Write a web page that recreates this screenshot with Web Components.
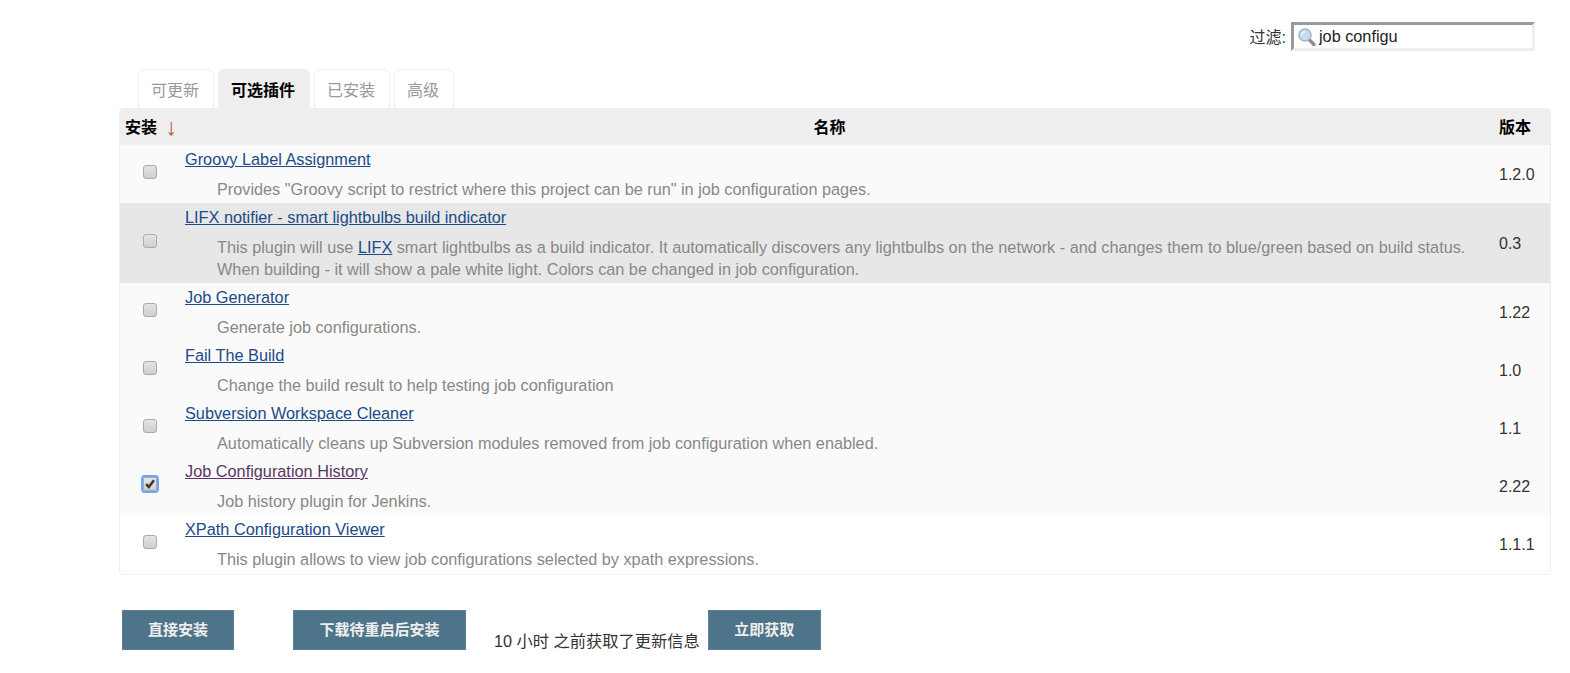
<!DOCTYPE html>
<html lang="zh">
<head>
<meta charset="utf-8">
<title>插件管理</title>
<style>
  html, body { margin: 0; padding: 0; background: #fff; }
  body { font: 16px "Liberation Sans", "Noto Sans CJK SC", sans-serif; color: #333; overflow: hidden; }
</style>
</head>
<body>
<plugin-page>
  <filter-box slot="filter" label="过滤:" value="job configu"></filter-box>

  <tab-item slot="tabs">可更新</tab-item>
  <tab-item slot="tabs" active>可选插件</tab-item>
  <tab-item slot="tabs">已安装</tab-item>
  <tab-item slot="tabs">高级</tab-item>

  <plugin-row name="Groovy Label Assignment" version="1.2.0">Provides "Groovy script to restrict where this project can be run" in job configuration pages.</plugin-row>
  <plugin-row name="LIFX notifier - smart lightbulbs build indicator" version="0.3" hilite>This plugin will use <a href="#" style="color:#204a87">LIFX</a> smart lightbulbs as a build indicator. It automatically discovers any lightbulbs on the network - and changes them to blue/green based on build status. When building - it will show a pale white light. Colors can be changed in job configuration.</plugin-row>
  <plugin-row name="Job Generator" version="1.22">Generate job configurations.</plugin-row>
  <plugin-row name="Fail The Build" version="1.0">Change the build result to help testing job configuration</plugin-row>
  <plugin-row name="Subversion Workspace Cleaner" version="1.1">Automatically cleans up Subversion modules removed from job configuration when enabled.</plugin-row>
  <plugin-row name="Job Configuration History" version="2.22" checked>Job history plugin for Jenkins.</plugin-row>
  <plugin-row name="XPath Configuration Viewer" version="1.1.1" plain>This plugin allows to view job configurations selected by xpath expressions.</plugin-row>

  <action-button slot="footer" style="width:112px;margin-left:122px">直接安装</action-button>
  <action-button slot="footer" style="width:173px;margin-left:59px">下载待重启后安装</action-button>
  <update-note slot="footer">10 小时 之前获取了更新信息</update-note>
  <action-button slot="footer" style="width:113px">立即获取</action-button>
</plugin-page>

<script>
class PluginPage extends HTMLElement {
  constructor() {
    super();
    this.attachShadow({ mode: 'open' });
  }
  connectedCallback() {
    this.shadowRoot.innerHTML = `
      <style>
        :host { display: block; }
        .top { display: flex; justify-content: flex-end; padding: 22px 35px 0 0; height: 69px; box-sizing: border-box; }
        .tabs { display: flex; gap: 4px; padding-left: 138px; height: 39px; }
        .table { margin-left: 119px; width: 1432px; box-sizing: border-box; height: 467px; border: 1px solid #eee; border-radius: 4px; overflow: hidden; }
        .head { display: grid; grid-template-columns: 60px 1fr 51px; height: 36px; box-sizing: border-box; padding-bottom: 2px; background: #eee; color: #000; font-weight: bold; align-items: center; }
        .head div:first-child { padding-left: 5px; white-space: nowrap; }
        .head .name { text-align: center; padding-right: 20px; }
        .arrow { color: #b5603a; font-weight: normal; font-size: 24px; line-height: 0; margin-left: 4px; vertical-align: -2px; }
        .footer { display: flex; padding-top: 35px; }
      </style>
      <div class="top"><slot name="filter"></slot></div>
      <div class="tabs"><slot name="tabs"></slot></div>
      <div class="table">
        <div class="head">
          <div>安装 <span class="arrow">↓</span></div>
          <div class="name">名称</div>
          <div>版本</div>
        </div>
        <slot></slot>
      </div>
      <div class="footer"><slot name="footer"></slot></div>
    `;
  }
}

class FilterBox extends HTMLElement {
  constructor() {
    super();
    this.attachShadow({ mode: 'open' });
  }
  connectedCallback() {
    this.shadowRoot.innerHTML = `
      <style>
        :host { display: flex; align-items: center; gap: 5px; height: 29px; }
        .label { color: #333; font-size: 16px; padding-bottom: 2px; }
        .box { display: flex; align-items: center; width: 244px; height: 29px; box-sizing: border-box; border: 3px solid; border-color: #999 #eee #eee #999; background: #fff; padding-left: 3px; }
        svg { width: 20px; height: 20px; flex: none; }
        input { border: 0; outline: 0; padding: 0; margin-left: 2px; width: 190px; font: 16.25px "Liberation Sans", sans-serif; color: #222; background: transparent; }
      </style>
      <span class="label">${this.getAttribute('label')}</span>
      <div class="box">
        <svg viewBox="0 0 20 20">
          <path d="M11.5 12 L17 17.5" stroke="#8b8f93" stroke-width="3.4" stroke-linecap="round"/>
          <circle cx="8" cy="8" r="6" fill="#c5dcf2" stroke="#a3b5c6" stroke-width="1.6"/>
          <path d="M4.6 8 A3.4 3.4 0 0 1 8 4.6" fill="none" stroke="#f2f8fd" stroke-width="1.4"/>
        </svg>
        <input value="${this.getAttribute('value')}">
      </div>
    `;
  }
}

class TabItem extends HTMLElement {
  constructor() {
    super();
    this.attachShadow({ mode: 'open' });
  }
  connectedCallback() {
    this.shadowRoot.innerHTML = `
      <style>
        :host { display: flex; align-items: center; box-sizing: border-box; height: 39px; padding: 0 14px 0 12px; border: 1px solid #eee; border-bottom: 0; border-radius: 6px 6px 0 0; color: #999; font-size: 16px; }
        :host([active]) { background: #eee; color: #000; font-weight: bold; }
      </style>
      <slot></slot>
    `;
  }
}

class PluginCheck extends HTMLElement {
  constructor() {
    super();
    this.attachShadow({ mode: 'open' });
  }
  connectedCallback() {
    const mark = this.hasAttribute('checked')
      ? '<svg viewBox="0 0 14 14"><path d="M2.5 7.2 L5.6 10.4 L11.6 2.6" fill="none" stroke="#3a3a3a" stroke-width="3"/></svg>'
      : '';
    this.shadowRoot.innerHTML = `
      <style>
        :host { display: block; width: 14px; height: 14px; box-sizing: border-box; border: 1px solid #aaa; border-radius: 3px; background: linear-gradient(#e4e4e4, #cfcfcf); }
        :host([checked]) { box-shadow: 0 0 0 2px #6ea6f5; border-radius: 2px; }
        svg { display: block; width: 12px; height: 12px; }
      </style>
      ${mark}
    `;
  }
}

class PluginRow extends HTMLElement {
  constructor() {
    super();
    this.attachShadow({ mode: 'open' });
  }
  connectedCallback() {
    const checked = this.hasAttribute('checked');
    this.shadowRoot.innerHTML = `
      <style>
        :host { display: grid; grid-template-columns: 60px 1fr 51px; background: #fafafa; }
        :host([hilite]) { background: #e7e7e7; }
        :host([plain]) { background: #fff; }
        .check { display: flex; justify-content: center; align-items: center; padding-bottom: 5px; }
        .main { padding: 5px 20px 3px 5px; line-height: 18px; font-size: 16.3px; }
        .main a { color: ${checked ? '#5c3566' : '#204a87'}; }
        .desc { padding: 11px 0 0 32px; color: #888; line-height: 21px; font-size: 16.25px; }
        :host([hilite]) .desc { padding-top: 10px; line-height: 22px; }
        .ver { display: flex; align-items: center; padding-top: 2px; color: #333; }
      </style>
      <div class="check"><plugin-check ${checked ? 'checked' : ''}></plugin-check></div>
      <div class="main">
        <a href="#">${this.getAttribute('name')}</a>
        <div class="desc"><slot></slot></div>
      </div>
      <div class="ver">${this.getAttribute('version')}</div>
    `;
  }
}

class ActionButton extends HTMLElement {
  constructor() {
    super();
    this.attachShadow({ mode: 'open' });
  }
  connectedCallback() {
    this.shadowRoot.innerHTML = `
      <style>
        :host { display: flex; justify-content: center; align-items: center; flex: none; height: 40px; box-sizing: border-box; padding-bottom: 3px; background: #4d7489; border: 1px solid #5a8299; color: #eee; font-weight: bold; font-size: 15px; }
      </style>
      <slot></slot>
    `;
  }
}

class UpdateNote extends HTMLElement {
  constructor() {
    super();
    this.attachShadow({ mode: 'open' });
  }
  connectedCallback() {
    this.shadowRoot.innerHTML = `
      <style>
        :host { display: block; align-self: flex-end; margin: 0 8px -2px 28px; font-size: 16.25px; color: #333; white-space: nowrap; }
      </style>
      <slot></slot>
    `;
  }
}

customElements.define('plugin-check', PluginCheck);
customElements.define('plugin-row', PluginRow);
customElements.define('filter-box', FilterBox);
customElements.define('tab-item', TabItem);
customElements.define('action-button', ActionButton);
customElements.define('update-note', UpdateNote);
customElements.define('plugin-page', PluginPage);
</script>
</body>
</html>
